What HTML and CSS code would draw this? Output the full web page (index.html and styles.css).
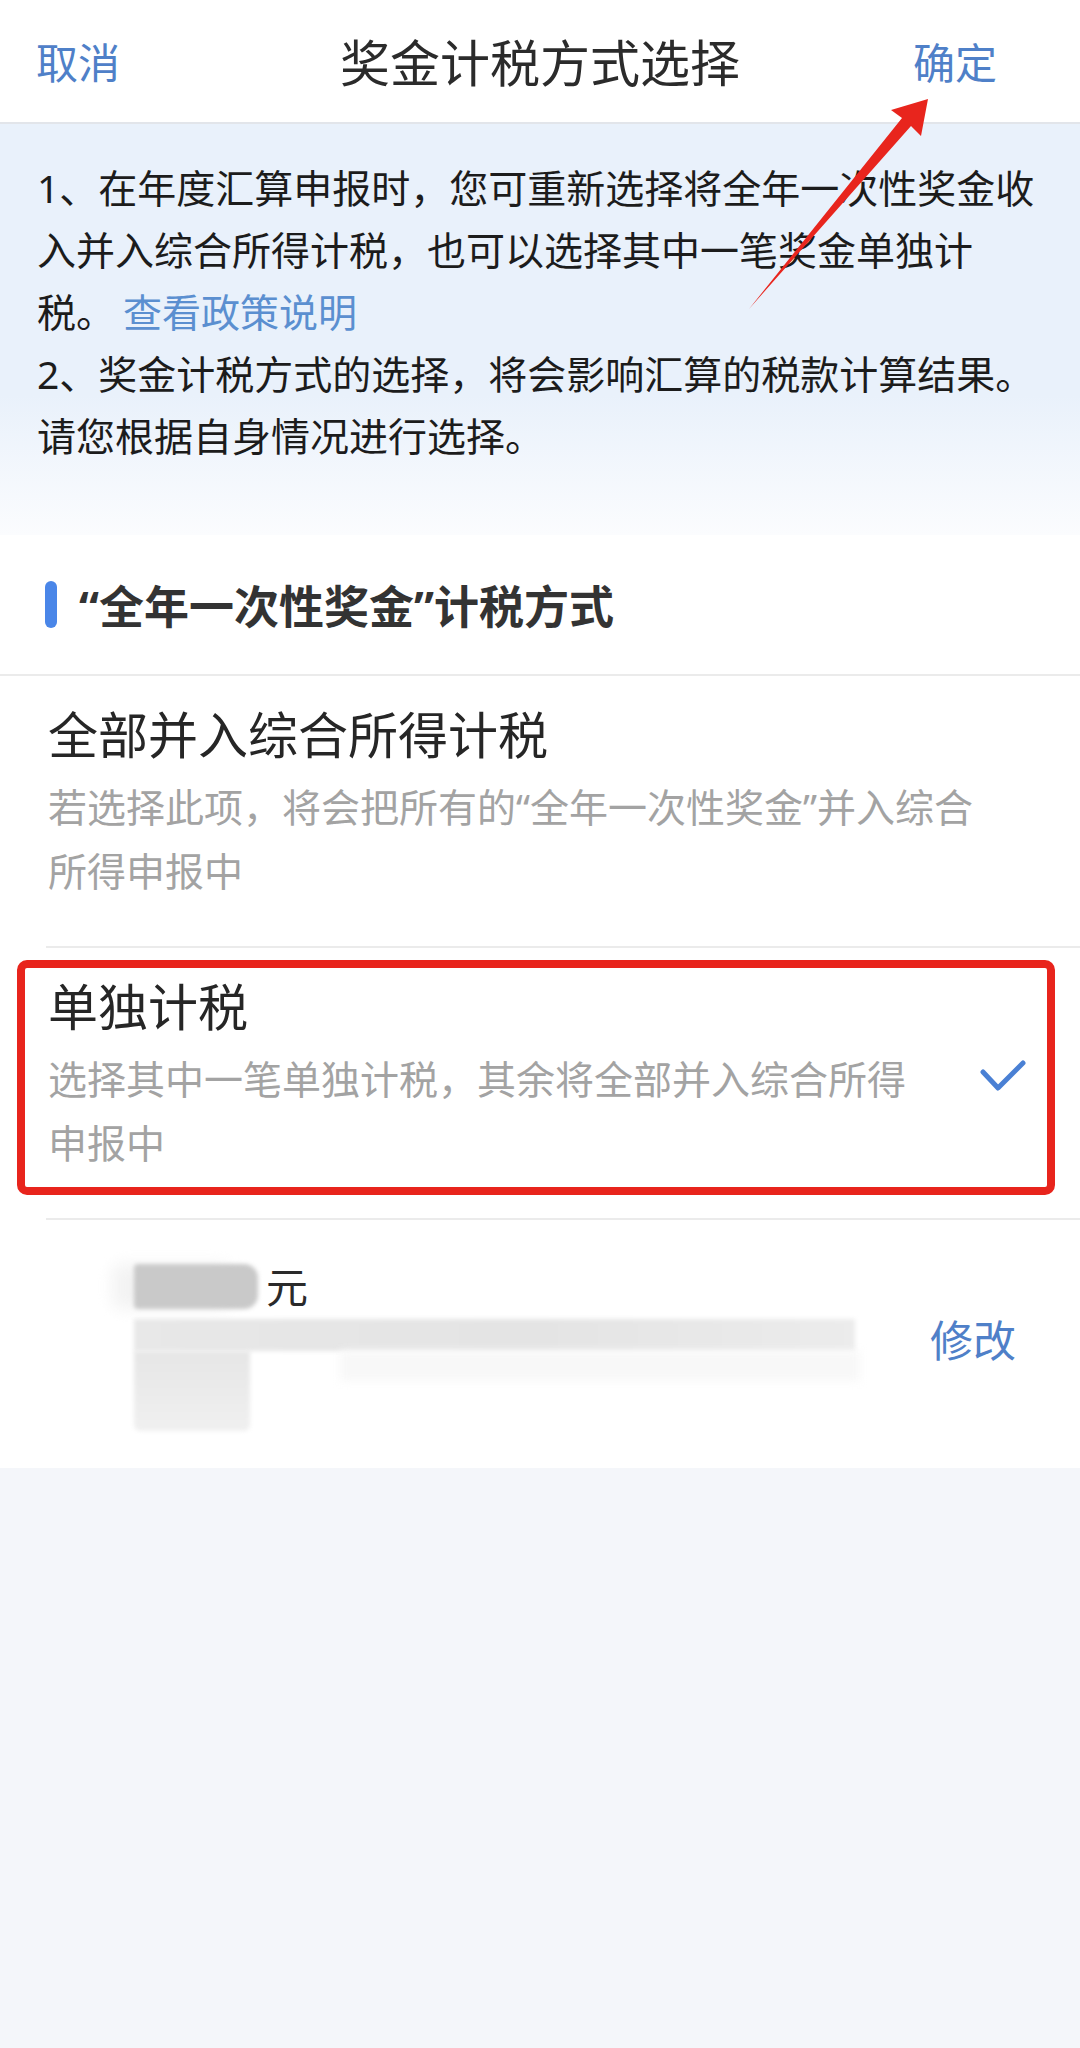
FILE: index.html
```html
<!DOCTYPE html>
<html lang="zh-CN">
<head>
    <meta charset="UTF-8">
    <meta name="viewport" content="width=device-width, initial-scale=1.0">
    <title>奖金计税方式选择</title>
    <link rel="stylesheet" href="styles.css">
</head>
<body>
    <div class="page">
        <header class="nav">
            <span class="nav-btn nav-left">取消</span>
            <h1 class="nav-title">奖金计税方式选择</h1>
            <span class="nav-btn nav-right">确定</span>
        </header>

        <div class="notice">
            <p>1、在年度汇算申报时，您可重新选择将全年一次性奖金收入并入综合所得计税，也可以选择其中一笔奖金单独计税。<a class="notice-link">查看政策说明</a></p>
            <p>2、奖金计税方式的选择，将会影响汇算的税款计算结果。请您根据自身情况进行选择。</p>
        </div>

        <section class="panel">
            <div class="panel-head">
                <span class="panel-bar"></span>
                <h2>“全年一次性奖金”计税方式</h2>
            </div>

            <div class="option">
                <div class="option-text">
                    <h3>全部并入综合所得计税</h3>
                    <p>若选择此项，将会把所有的“全年一次性奖金”并入综合所得申报中</p>
                </div>
            </div>

            <div class="option">
                <div class="option-text">
                    <h3>单独计税</h3>
                    <p>选择其中一笔单独计税，其余将全部并入综合所得申报中</p>
                </div>
                <svg class="option-check" viewBox="0 0 46 32" width="46" height="32">
                    <polyline points="3,13 18,29 43,4" fill="none" stroke="#4a80d4" stroke-width="5" stroke-linecap="round" stroke-linejoin="round"/>
                </svg>
                <!-- annotation box from the screenshot -->
                <div class="mark-box"></div>
            </div>

            <div class="amount">
                <div class="amount-info">
                    <div class="amount-row">
                        <span class="blur blur-num"></span>
                        <span class="amount-unit">元</span>
                    </div>
                    <div class="blur blur-line"></div>
                    <div class="amount-bottom">
                        <span class="blur blur-block"></span>
                        <span class="blur blur-faint"></span>
                    </div>
                </div>
                <span class="amount-edit">修改</span>
            </div>
        </section>

        <!-- annotation arrow pointing at 确定 -->
        <svg class="mark-arrow" viewBox="0 0 1080 400" width="1080" height="400">
            <polygon points="928,99 891,110 902,118 749,309 911,126 921,136" fill="#e8251d"/>
        </svg>
    </div>
</body>
</html>
```

FILE: styles.css
```css
body {
    margin: 0;
    padding: 0;
    background: #f4f6fa;
    font-family: "Noto Sans", "Noto Sans CJK SC", sans-serif;
    color: #222;
}

.page {
    position: relative;
    width: 1080px;
    min-height: 2048px;
}

.nav {
    display: grid;
    grid-template-columns: 1fr auto 1fr;
    align-items: center;
    height: 120px;
    padding-bottom: 2px;
    background: #fff;
    border-bottom: 2px solid #e2e5ea;
}

.nav-title {
    margin: 0;
    font-size: 50px;
    font-weight: 400;
    color: #2b2b2b;
}

.nav-btn {
    font-size: 42px;
    color: #4f80c8;
}

.nav-left {
    padding-left: 36px;
}

.nav-right {
    text-align: right;
    padding-right: 83px;
}

.notice {
    padding: 33px 37px 68px;
    background: linear-gradient(#e9f1fb 0, #e9f1fb 66%, #fbfcfe 100%);
    font-size: 39px;
    line-height: 62px;
    color: #1c1c1c;
}

.notice p {
    margin: 0;
}

.notice-link {
    margin-left: 8px;
    color: #5b8fd0;
}

.panel {
    background: #fff;
}

.panel-head {
    display: flex;
    align-items: center;
    gap: 22px;
    height: 139px;
    padding-left: 45px;
    border-bottom: 2px solid #ebebeb;
}

.panel-bar {
    width: 12px;
    height: 47px;
    border-radius: 6px;
    background: #4a86e8;
}

.panel-head h2 {
    margin: 0;
    font-size: 45px;
    font-weight: 700;
    color: #333;
}

.option {
    position: relative;
    display: flex;
    align-items: center;
    margin-left: 46px;
    padding: 27px 56px 43px 2px;
    border-bottom: 2px solid #ebebeb;
}

.option-text {
    flex: 1;
    padding-right: 40px;
}

.option-text h3 {
    margin: 0 0 8px;
    font-size: 50px;
    font-weight: 400;
    line-height: 64px;
    color: #262626;
}

.option-text p {
    margin: 0;
    font-size: 39px;
    line-height: 64px;
    color: #a3a3a3;
}

.option-check {
    flex: none;
    margin-right: -2px;
}

.mark-box {
    position: absolute;
    top: 12px;
    left: -29px;
    right: 25px;
    bottom: 23px;
    border: 8px solid #e8241c;
    border-radius: 10px;
}

.amount {
    display: flex;
    align-items: center;
    justify-content: space-between;
    height: 248px;
    padding: 0 64px 0 134px;
}

.amount-info {
    display: flex;
    flex-direction: column;
    margin-top: 6px;
}

.amount-row {
    display: flex;
    align-items: center;
    gap: 8px;
}

.amount-unit {
    font-size: 42px;
    line-height: 45px;
    color: #2a2a2a;
}

.blur {
    display: block;
    filter: blur(2px);
}

.blur-num {
    width: 124px;
    height: 45px;
    border-radius: 4px 14px 14px 4px;
    background: #c9c9c9;
    box-shadow: -22px 0 16px #f3f3f3;
}

.blur-line {
    width: 721px;
    height: 32px;
    margin-top: 10px;
    background: linear-gradient(90deg, #e8e8e8, #e4e4e4 55%, #ececec);
}

.amount-bottom {
    display: flex;
    align-items: flex-start;
}

.blur-block {
    width: 116px;
    height: 80px;
    border-radius: 0 0 6px 6px;
    background: linear-gradient(#e6e6e6, #f0f0f0);
}

.blur-faint {
    width: 520px;
    height: 30px;
    margin-left: 90px;
    background: #f8f8f8;
    filter: blur(5px);
}

.amount-edit {
    margin-bottom: 12px;
    font-size: 43px;
    color: #4f80c8;
}

.mark-arrow {
    position: absolute;
    top: 0;
    left: 0;
    pointer-events: none;
}
```
